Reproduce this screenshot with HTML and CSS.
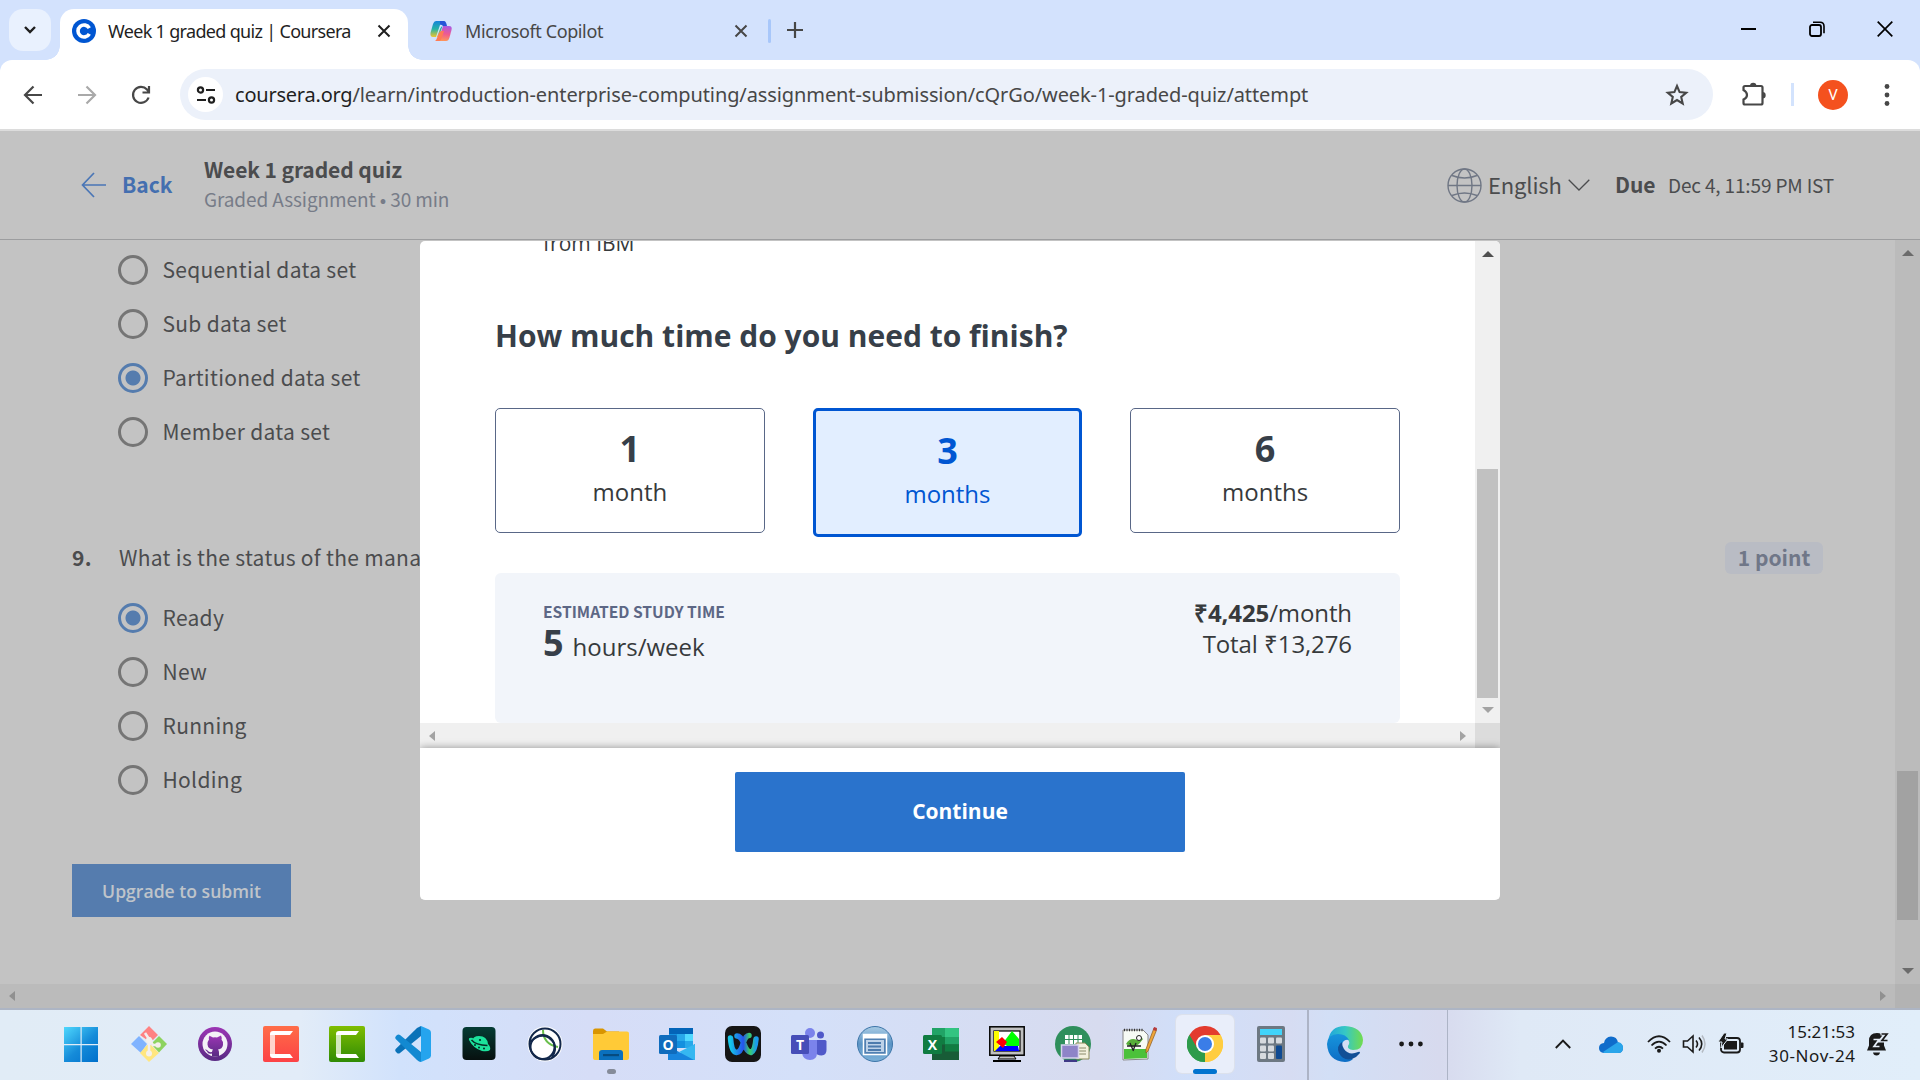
FILE: index.html
```html
<!DOCTYPE html>
<html lang="en">
<head>
<meta charset="utf-8">
<title>Week 1 graded quiz | Coursera</title>
<link rel="stylesheet" href="styles.css">
</head>
<body>
<div class="screen">
  <div class="tabstrip">
    <div class="tab-search"><svg width="14" height="14" viewBox="0 0 14 14"><path d="M2 4l5 5 5-5" fill="none" stroke="#1f1f1f" stroke-width="2.4"/></svg></div>
    <div class="tab active">
      <svg class="favicon" width="24" height="24" viewBox="0 0 24 24"><circle cx="12" cy="12" r="12" fill="#0056d2"/><path d="M17.3 9.2A6 6 0 1 0 17.3 14.8" fill="none" stroke="#fff" stroke-width="3.6"/></svg>
      <span class="tab-title t1">Week 1 graded quiz | Coursera</span>
      <svg class="tab-close" width="14" height="14" viewBox="0 0 14 14"><path d="M1.5 1.5l11 11M12.5 1.5l-11 11" stroke="#1f1f1f" stroke-width="2"/></svg>
    </div>
    <div class="tab">
      <svg class="favicon" width="24" height="24" viewBox="0 0 24 24"><defs><linearGradient id="cpA" x1="0" y1="0" x2="0" y2="1"><stop offset="0" stop-color="#1483dc"/><stop offset=".5" stop-color="#24b3a5"/><stop offset="1" stop-color="#f0c62d"/></linearGradient><linearGradient id="cpB" x1="0.3" y1="0" x2="0.2" y2="1"><stop offset="0" stop-color="#ae5ae0"/><stop offset=".5" stop-color="#ef5a90"/><stop offset="1" stop-color="#ff9955"/></linearGradient></defs><path d="M7 2h8l-5 16H4Q1 18 1.500 14L4 5Q5 2 7 2z" fill="url(#cpA)"/><path d="M17 22H9l5-15h6q3.500 0 2.500 4l-2 7.500Q19.500 22 17 22z" fill="url(#cpB)"/><path d="M11 2h4q2 0 3 5h-4q-2 0-3-2z" fill="#2754d8"/><path d="M14 7q-2 0-3 3l-3 8h-1l4-12q1-1 3 1z" fill="#d3e2fd"/><path d="M10 14l-2 5q-1 3-2 3h4q2 0 3-4l2-6h-2q-2 0-3 2z" fill="#ff7b55"/></svg>
      <span class="tab-title t2">Microsoft Copilot</span>
      <svg class="tab-close" width="14" height="14" viewBox="0 0 14 14"><path d="M1.500 1.500l11 11M12.500 1.500l-11 11" stroke="#474747" stroke-width="2"/></svg>
    </div>
    <i class="tab-divider"></i>
    <svg class="new-tab" width="16" height="16" viewBox="0 0 16 16"><path d="M8 0v16M0 8h16" stroke="#474747" stroke-width="2.200"/></svg>
    <div class="window-controls">
      <svg width="16" height="16" viewBox="0 0 16 16"><path d="M0 8h15" stroke="#000" stroke-width="2"/></svg>
      <svg width="16" height="16" viewBox="0 0 16 16"><rect x="1" y="4" width="11" height="11" rx="2" fill="none" stroke="#000" stroke-width="1.800"/><path d="M4 1.300h7q4 0 4 4v7" fill="none" stroke="#000" stroke-width="1.600"/></svg>
      <svg width="16" height="16" viewBox="0 0 16 16"><path d="M.7.7l14.600 14.600M15.300.7L.7 15.300" stroke="#000" stroke-width="1.700"/></svg>
    </div>
  </div>

  <div class="toolbar">
    <svg class="nav-back" width="20" height="20" viewBox="0 0 20 20"><path d="M19 10H3M10.500 1.500L2 10l8.500 8.500" fill="none" stroke="#474747" stroke-width="2.200"/></svg>
    <svg class="nav-fwd" width="20" height="20" viewBox="0 0 20 20"><path d="M1 10h16M9.500 1.500L18 10l-8.500 8.500" fill="none" stroke="#a9a9a9" stroke-width="2.200"/></svg>
    <svg class="nav-reload" width="20" height="20" viewBox="0 0 20 20"><path d="M17.600 12.500A8 8 0 1 1 16 4.500l1.500 1.800M18 1v6.500h-6.500" fill="none" stroke="#474747" stroke-width="2.200"/></svg>
    <div class="omnibox">
      <div class="site-info"><svg width="20" height="18" viewBox="0 0 20 18"><g fill="none" stroke="#1f1f1f" stroke-width="2.200"><circle cx="4.500" cy="4" r="2.600"/><path d="M10 4h9M1 14h9"/><circle cx="15.500" cy="14" r="2.600"/></g></svg></div>
      <div class="url"><b>coursera.org</b>/learn/introduction-enterprise-computing/assignment-submission/cQrGo/week-1-graded-quiz/attempt</div>
      <svg class="star" width="24" height="24" viewBox="0 0 24 24"><path d="M12 3l2.600 6.100 6.600.6-5 4.300 1.500 6.500-5.700-3.500-5.700 3.500L7.800 14l-5-4.300 6.600-.6z" fill="none" stroke="#474747" stroke-width="2.100"/></svg>
    </div>
    <svg class="ext" width="26" height="26" viewBox="0 0 26 26"><path d="M2.500 9V6.500q0-1.500 1.500-1.500h16q1.500 0 1.500 1.500V22q0 1.500-1.500 1.500H4q-1.500 0-1.500-1.500v-3.500q3.500-1.500 3.500-4.500T2.500 9z" fill="none" stroke="#474747" stroke-width="2.200"/><path d="M9 5a3.200 3.200 0 0 1 6.400 0zM21.500 11a3.200 3.200 0 0 1 0 6.400z" fill="#474747"/></svg>
    <i class="bar-divider"></i>
    <div class="avatar">V</div>
    <svg class="kebab" width="6" height="22" viewBox="0 0 6 22"><g fill="#474747"><circle cx="3" cy="2.500" r="2.400"/><circle cx="3" cy="11" r="2.400"/><circle cx="3" cy="19.500" r="2.400"/></g></svg>
  </div>

  <main class="page">
    <header class="quiz-head">
      <svg class="back-arrow" width="26" height="26" viewBox="0 0 26 26"><path d="M25 13H1.500M13 1L1.500 13 13 25" fill="none" stroke="#4a76b6" stroke-width="1.700"/></svg>
      <span class="back">Back</span>
      <div class="titles"><div class="title">Week 1 graded quiz</div><div class="subtitle">Graded Assignment • 30 min</div></div>
      <svg class="globe" width="35" height="35" viewBox="0 0 35 35"><g fill="none" stroke="#707785" stroke-width="1.400"><circle cx="17.500" cy="17.500" r="16.500"/><ellipse cx="17.500" cy="17.500" rx="7.500" ry="16.500"/><path d="M1 17.500h33M5 7.500q12.500 5 25 0M5 27.500q12.500-5 25 0"/></g></svg>
      <span class="lang">English</span>
      <svg class="chev" width="22" height="12" viewBox="0 0 22 12"><path d="M.7.7L11 11 21.300.7" fill="none" stroke="#4b4c4e" stroke-width="1.300"/></svg>
      <span class="due">Due</span>
      <span class="due-date">Dec 4, 11:59 PM IST</span>
    </header>
    <div class="body-row">
      <div class="quiz">
        <div class="option"><i class="radio"></i><span>Sequential data set</span></div>
        <div class="option"><i class="radio"></i><span>Sub data set</span></div>
        <div class="option"><i class="radio on"></i><span>Partitioned data set</span></div>
        <div class="option"><i class="radio"></i><span>Member data set</span></div>
        <div class="question"><span class="num">9.</span><span class="prompt">What is the status of the mana</span><span class="points">1 point</span></div>
        <div class="option"><i class="radio on"></i><span>Ready</span></div>
        <div class="option"><i class="radio"></i><span>New</span></div>
        <div class="option"><i class="radio"></i><span>Running</span></div>
        <div class="option"><i class="radio"></i><span>Holding</span></div>
        <div class="submit">Upgrade to submit</div>
      </div>
      <div class="page-vscroll"><i class="tri up"></i><i class="page-thumb"></i><i class="tri down"></i></div>
    </div>
    <div class="page-hscroll"><i class="tri left"></i><i class="tri right"></i><i class="page-corner"></i></div>

    <section class="modal">
      <div class="modal-main">
        <div class="modal-body">
          <div class="from">from IBM</div>
          <h2>How much time do you need to finish?</h2>
          <div class="plans">
            <div class="plan"><b>1</b><span>month</span></div>
            <div class="plan selected"><b>3</b><span>months</span></div>
            <div class="plan"><b>6</b><span>months</span></div>
          </div>
          <div class="estimate">
            <div><div class="est-label">ESTIMATED STUDY TIME</div><div class="hours"><b>5</b><span>hours/week</span></div></div>
            <div class="price"><div><b>₹4,425</b>/month</div><div>Total ₹13,276</div></div>
          </div>
        </div>
        <div class="modal-vscroll"><i class="tri up"></i><i class="modal-thumb"></i><i class="tri down"></i></div>
      </div>
      <div class="modal-hscroll"><i class="tri left"></i><i class="tri right"></i><i class="modal-corner"></i></div>
      <div class="modal-foot"><div class="continue">Continue</div></div>
    </section>
  </main>

  <footer class="taskbar">
    <div class="apps">
      <div class="app start"><svg viewBox="0 0 36 36"><defs><linearGradient id="win" gradientUnits="userSpaceOnUse" x1="2" y1="0" x2="34" y2="36"><stop offset="0" stop-color="#4fd8fd"/><stop offset=".55" stop-color="#158bd9"/><stop offset="1" stop-color="#0070cc"/></linearGradient></defs><path d="M1 1h16.500v17H1zM18.700 1H35v17H18.700zM1 19.200h16.500V36H1zM18.700 19.200H35V36H18.700z" fill="url(#win)"/></svg></div>
      <div class="app"><svg viewBox="0 0 36 36"><path d="M9 9l9-9 9 9-5 5-4-3-2 3z" fill="#ff8282"/><path d="M0 18l8-8 8 8-6 9z" fill="#80b3ff"/><path d="M28 10l8 8-8 8.500-8-8.500z" fill="#8dd35f"/><path d="M9 27l7-8h4l8 8-10 9z" fill="#ffe680"/><path d="M14 7l8 12 6 0M18 11v17" fill="none" stroke="#f2eef0" stroke-width="2.600"/><circle cx="18" cy="27.500" r="3" fill="#f4f0ec"/><circle cx="27" cy="19" r="2.800" fill="#f4f0ec"/><circle cx="18" cy="14" r="3" fill="#f4f0ec"/></svg></div>
      <div class="app"><svg viewBox="0 0 36 36"><defs><linearGradient id="gh" x1="0" y1="0" x2="0" y2="1"><stop offset="0" stop-color="#9b35b4"/><stop offset="1" stop-color="#592a83"/></linearGradient></defs><circle cx="18" cy="18" r="17" fill="url(#gh)"/><circle cx="18" cy="18" r="12.500" fill="#f4f1f7"/><path d="M12 9.500l4 2q2-.5 4 0l4-2q1 2 .5 4 2 2 1.500 5.500-.7 4-5 4.500 1 1 1 3v4h-7v-3q-4 1-5-2l-2-2q2-.5 3 1.500 1 1.500 4 1 0-1.500 1-2.500-5-.5-5.500-5-.2-3 1.500-5-.5-2 .5-4z" fill="url(#gh)"/></svg></div>
      <div class="app"><svg viewBox="0 0 36 36"><defs><linearGradient id="cr" x1="0" y1="0" x2="0" y2="1"><stop offset="0" stop-color="#ff6d48"/><stop offset="1" stop-color="#fc4246"/></linearGradient></defs><rect width="36" height="36" rx="2" fill="url(#cr)"/><path d="M10 5h20l-3 4H12v19h15l3 4H10q-3 0-3-3V8q0-3 3-3z" fill="#fff"/><path d="M7 9l5 0v19l-5 0z" fill="#ffd5cc"/></svg></div>
      <div class="app"><svg viewBox="0 0 36 36"><defs><linearGradient id="cg" x1="0" y1="0" x2="0" y2="1"><stop offset="0" stop-color="#7fbd00"/><stop offset="1" stop-color="#2f8b05"/></linearGradient></defs><rect width="36" height="36" rx="2" fill="url(#cg)"/><path d="M10 5h20l-3 4H12v19h15l3 4H10q-3 0-3-3V8q0-3 3-3z" fill="#fff"/><path d="M7 9l5 0v19l-5 0z" fill="#d3e8bd"/></svg></div>
      <div class="app"><svg viewBox="0 0 36 36"><path d="M26 0v10L5 27q-1.500 1-3 0L.7 25.500q-1-1.200 0-2.500L22 2z" fill="#0b72b8"/><path d="M.7 10.500L2 9q1.500-1 3 0l21 17v10q-2 0-4-2L.7 13q-1-1.200 0-2.500z" fill="#1389d1"/><path d="M26 0l8 3.500q2 1 2 3v23q0 2-2 3L26 36z" fill="#25a4ee"/></svg></div>
      <div class="app"><svg viewBox="0 0 36 36"><defs><linearGradient id="pl" x1="0" y1="0" x2="0" y2="1"><stop offset="0" stop-color="#053c34"/><stop offset="1" stop-color="#07100f"/></linearGradient></defs><rect x="1.500" y="1" width="33" height="33" rx="4" fill="url(#pl)"/><path d="M11 15q1-5 7-5 8 0 9 8 3 3 2 6-2 2-8 1Q12 22 8 14q-1-3 4-2z" fill="#1ce29c"/><path d="M10.500 14q4 5 16 5.500" fill="none" stroke="#052c26" stroke-width="1.300"/><g fill="#052c26"><circle cx="14" cy="19" r="1"/><circle cx="18" cy="21.500" r="1"/><circle cx="23" cy="22.500" r="1"/><circle cx="19" cy="14" r="1.100"/></g></svg></div>
      <div class="app"><svg viewBox="0 0 36 36"><circle cx="18" cy="18" r="17.500" fill="#fff"/><path d="M16 4q0 14 15 17" fill="none" stroke="#69bf4b" stroke-width="2"/><g fill="none" stroke="#12284b" stroke-width="2"><circle cx="18" cy="18" r="15.500"/><circle cx="15.500" cy="21" r="12"/><path d="M3 16Q17 3 27 17q3 7-2 14"/></g></svg></div>
      <div class="app run"><svg viewBox="0 0 36 36"><path d="M0 5q0-2.500 2-2.500h8l4 3h12v6H0z" fill="#d99500"/><path d="M0 8h10l4-2.500h20q2 0 2 2V32q0 2-2 2H2q-2 0-2-2z" fill="#ffca37"/><path d="M6 34v-7q0-3 3-3h18q3 0 3 3v7z" fill="#0a70bd"/><rect x="10" y="28" width="16" height="2.200" fill="#064b7f"/></svg></div>
      <div class="app"><svg viewBox="0 0 36 36"><path d="M10 2h24v20H10z" fill="#1490df"/><path d="M10 2h24v6H10z" fill="#0364b8"/><path d="M18 8h8v7h-8z" fill="#28a8ea"/><path d="M26 8h8v7h-8z" fill="#50d9ff"/><path d="M26 15h8v7h-8z" fill="#28a8ea"/><path d="M9 20l13 7 14-9v15q0 1-1 1H9z" fill="#1784dd"/><path d="M36 18v15q0 1-1 1L20 26z" fill="#35b7f1"/><rect y="9" width="18" height="19" rx="1.500" fill="#0f6cbd"/><text x="9" y="23.500" text-anchor="middle" class="glyph">O</text></svg></div>
      <div class="app"><svg viewBox="0 0 36 36"><defs><linearGradient id="wx" x1="0" x2="1"><stop offset="0" stop-color="#15c7e8"/><stop offset=".5" stop-color="#2553ed"/><stop offset=".75" stop-color="#3ccf64"/><stop offset="1" stop-color="#1a9aee"/></linearGradient></defs><rect width="36" height="36" rx="7" fill="#151515"/><path d="M5.500 12q1 14 6 14.500 4 0 6.500-8.500t6-8.500M12 10q4 0 7 8t7 8.500q4-2 5-13.500" fill="none" stroke="url(#wx)" stroke-width="5.500" stroke-linecap="round"/></svg></div>
      <div class="app"><svg viewBox="0 0 36 36"><circle cx="19" cy="7" r="5" fill="#7b83eb"/><circle cx="29.500" cy="9" r="3.500" fill="#5059c9"/><path d="M24 14h10q1.500 0 1.500 1.500V24q0 5-5 5.500-5 0-7-4z" fill="#5059c9"/><path d="M11 14h15v13q0 7-7 7t-8-7z" fill="#7b83eb"/><rect y="9" width="18" height="19" rx="1.500" fill="#464eb8"/><text x="9" y="23.500" text-anchor="middle" class="glyph">T</text></svg></div>
      <div class="app"><svg viewBox="0 0 36 36"><defs><linearGradient id="bl" x1="0" y1="0" x2="0" y2="1"><stop offset="0" stop-color="#a8cbe4"/><stop offset=".5" stop-color="#5b94c5"/><stop offset="1" stop-color="#7bb0d8"/></linearGradient></defs><circle cx="18" cy="18" r="17.500" fill="url(#bl)" stroke="#3d75a8"/><rect x="6.500" y="8.500" width="23" height="20" fill="#5080b2" stroke="#fff" stroke-width="1.500"/><path d="M7 10.500h22" stroke="#fff" stroke-width="4"/><rect x="9" y="14" width="18" height="12" fill="#bdd2e8"/><path d="M11 17h13M11 20.500h13M11 24h13" stroke="#4c7bad" stroke-width="1.800"/></svg></div>
      <div class="app"><svg viewBox="0 0 36 36"><path d="M9 2h26q1 0 1 1v31H9z" fill="#185c37"/><path d="M9 2h13v9H9z" fill="#21a366"/><path d="M22 2h13q1 0 1 1v8H22z" fill="#33c481"/><path d="M9 11h13v7.500H9z" fill="#107c41"/><path d="M22 11h14v7.500H22z" fill="#21a366"/><path d="M22 18.500h14v7H22z" fill="#107c41"/><rect y="9" width="19" height="19" rx="1.500" fill="#107c41"/><text x="9.500" y="23.500" text-anchor="middle" class="glyph">X</text></svg></div>
      <div class="app"><svg viewBox="0 0 36 36"><rect x=".8" y=".8" width="34.400" height="28.400" fill="#c0c0c0" stroke="#000" stroke-width="1.500"/><rect x="5" y="5" width="26" height="20" fill="#fff" stroke="#000" stroke-width="1.200"/><path d="M5 5h5v20H5z" fill="#ff0"/><path d="M14 17l9-12 7 8v7H18z" fill="#0f0"/><path d="M6 25l5-5h18l1 5z" fill="#00f"/><path d="M7 16l6-5 5 5-4 6z" fill="#f00"/><path d="M11 30h14l2 3H9z" fill="#c0c0c0" stroke="#000"/><path d="M4 35h28" stroke="#000" stroke-width="2"/></svg></div>
      <div class="app"><svg viewBox="0 0 36 36"><circle cx="18" cy="18" r="18" fill="#2f8f5c"/><path d="M10 9h17v9H10z" fill="#fff"/><path d="M14 9v9M18.500 9v9M23 9v9M10 13.500h17" stroke="#2f8f5c"/><path d="M21 17h9l4 4v12H21z" fill="#f3f1dd" stroke="#8a8a5a"/><path d="M24 22h7M24 25h7M24 28h7" stroke="#8a8a6a"/><rect x="6.500" y="19" width="17" height="13" fill="#8e84c8" stroke="#d6d3ee" stroke-width="1.500"/><path d="M9 35h13" stroke="#3f3a86" stroke-width="2.500"/></svg></div>
      <div class="app"><svg viewBox="0 0 36 36"><path d="M2 4h20l5 5v24l-25 1z" fill="#f7fbf5" stroke="#888"/><path d="M3 4h19" stroke="#333" stroke-width="2.500" stroke-dasharray="1 1.500"/><path d="M3 23h23v9l-23 1z" fill="#4cc13a"/><path d="M5 18q4-7 11-4l3-4 3 3-4 5q-6 5-13 0z" fill="#58ae3a"/><circle cx="18" cy="12" r="2.500" fill="#fff" stroke="#222"/><path d="M6 20h14M9 17l3 7M15 17l-3 8" stroke="#222" stroke-width="1.300"/><path d="M33 2l3 1-9 22-2 2v-4z" fill="#eea53a" stroke="#8a5a20" stroke-width=".7"/><path d="M33 1l3 1-1 3-3-1z" fill="#b73940"/></svg></div>
      <div class="app current"><svg viewBox="0 0 36 36"><path d="M18 18L2.400 9A18 18 0 0 1 33.600 9z" fill="#e33b2e"/><path d="M18 18L33.600 9A18 18 0 0 1 18 36z" fill="#ffcd41"/><path d="M18 18v18A18 18 0 0 1 2.400 9z" fill="#2d9b4b"/><path d="M18 9h15.600Q36 14 35.900 18L26 22z" fill="#ffcd41"/><path d="M10 22L2.400 9l8-2 8 2z" fill="#e33b2e"/><path d="M2.400 9l8.600 15 7 3v9A18 18 0 0 1 2.400 9z" fill="#2d9b4b"/><path d="M18 36l8-13.500 2-5 8 .5A18 18 0 0 1 18 36z" fill="#ffcd41"/><circle cx="18" cy="18" r="9" fill="#fff"/><circle cx="18" cy="18" r="7" fill="#3a7de8"/></svg></div>
      <div class="app"><svg viewBox="0 0 36 36"><rect x="4" width="28" height="36" rx="2" fill="#6d7882"/><rect x="7" y="3" width="22" height="6" fill="#41d4fa"/><g fill="#d6dade"><rect x="7" y="11.500" width="6" height="6" rx="1"/><rect x="15" y="11.500" width="6" height="6" rx="1"/><rect x="23" y="11.500" width="6" height="6" rx="1"/><rect x="7" y="19.500" width="6" height="6" rx="1"/><rect x="15" y="19.500" width="6" height="6" rx="1"/><rect x="7" y="27" width="6" height="6" rx="1"/><rect x="15" y="27" width="6" height="6" rx="1"/></g><rect x="23" y="19.500" width="6" height="13.500" rx="1" fill="#0f4a92"/></svg></div>
    </div>
    <div class="pinned">
      <svg width="36" height="36" viewBox="0 0 36 36"><defs><linearGradient id="eg" x1="0" x2="1"><stop offset="0" stop-color="#20a4dd"/><stop offset=".5" stop-color="#36c8c4"/><stop offset="1" stop-color="#72dc4d"/></linearGradient><linearGradient id="eb" x1="0" y1="0" x2="0" y2="1"><stop offset="0" stop-color="#1795dc"/><stop offset="1" stop-color="#0d6dc5"/></linearGradient></defs><path d="M1 15Q3 0 18 0q17 1 18 14 0 10-10 10-6-1-5-4 3-4-1-7-8-7-19 2z" fill="url(#eg)"/><path d="M0 18q1-10 11-10 8 0 11 6-5-1-7 4-3 12 11 15-3 3-8 3Q1 35 0 18z" fill="url(#eb)"/><path d="M15 16q-6 4-3 11 4 8 13 6 5-2 8-6 0-2-2-1-9 4-14-3-2-3-2-7z" fill="#114f96"/></svg>
      <svg class="more" width="24" height="6" viewBox="0 0 24 6"><g fill="#1a1a1a"><circle cx="2.600" cy="3" r="2.400"/><circle cx="12" cy="3" r="2.400"/><circle cx="21.400" cy="3" r="2.400"/></g></svg>
    </div>
    <div class="tray">
      <svg class="up" width="16" height="10" viewBox="0 0 16 10"><path d="M.8 9L8 1.500 15.200 9" fill="none" stroke="#1a1a1a" stroke-width="1.900"/></svg>
      <svg class="cloud" width="24" height="17" viewBox="0 0 24 17"><path d="M5 7q1-6 7-6.500 6 0 7 6 5 1 5 5.500 0 5-5 5H5q-5-.5-5-5T5 7z" fill="#0f6ccb"/><path d="M4 16l15-10q5 1 5 6 0 5-5 5H5z" fill="#2aa5ea"/></svg>
      <svg class="wifi" width="24" height="18" viewBox="0 0 24 18"><g fill="none" stroke="#1a1a1a" stroke-width="1.800"><path d="M1 7q11-11.500 22 0M4.500 10.500q7.500-7.800 15 0M8 13.700q4-4 8 0"/></g><circle cx="12" cy="15.700" r="2" fill="#1a1a1a"/></svg>
      <svg class="vol" width="25" height="20" viewBox="0 0 25 20"><path d="M1.500 7h4L11 2v16l-5.500-5h-4zM14 6.500q3 3.500 0 7M17 3.500q5.500 6.500 0 13" fill="none" stroke="#1a1a1a" stroke-width="1.600"/><path d="M20 1.500q6 8.500 0 17" fill="none" stroke="#b4bac2" stroke-width="1.500"/></svg>
      <svg class="bat" width="26" height="20" viewBox="0 0 26 20"><rect x="2" y="4" width="19" height="14.500" rx="3" fill="none" stroke="#1a1a1a" stroke-width="1.800"/><path d="M22 8.500h1.500q1 0 1 1v3.500q0 1-1 1H22z" fill="#1a1a1a"/><rect x="5" y="7" width="13" height="8.500" fill="#1a1a1a"/><path d="M5-1L-1 8h4l-1 6 7-9H6l2-6z" fill="#1a1a1a" stroke="#e0ecf7" stroke-width="1"/></svg>
      <div class="clock"><span class="time">15:21:53</span><span class="date">30-Nov-24</span></div>
      <svg class="bell" width="22" height="24" viewBox="0 0 22 24"><path d="M10 1q5 0 7 4v8.500l2 5H0l2-5V9q0-8 8-8z" fill="#1a1a1a"/><path d="M6 20.500h7q-.5 3-3.500 3T6 20.500z" fill="#1a1a1a"/><path d="M13.500 1.500h6l-5.500 7h6" fill="none" stroke="#e4edf8" stroke-width="4"/><path d="M14.500 2h5.500l-5 6.500h5.500" fill="none" stroke="#1a1a1a" stroke-width="1.700"/><path d="M6.500 7.500H12l-5 7h5.500" fill="none" stroke="#e8eef8" stroke-width="1.700"/></svg>
    </div>
  </footer>
</div>
</body>
</html>
```
FILE: styles.css
```css
* { box-sizing: border-box; }
body { margin: 0; overflow: hidden; }
svg { display: block; flex: none; }
i { display: block; flex: none; }
.screen { width: 1920px; height: 1080px; display: flex; flex-direction: column; font-family: "Open Sans", sans-serif; white-space: nowrap; overflow: hidden; }

/* tab strip */
.tabstrip { height: 60px; background: #d3e2fd; display: flex; align-items: flex-start; flex: none; position: relative; z-index: 1; }
.tab-search { width: 42px; height: 42px; margin: 9px 9px 0; border-radius: 14px; background: #e9f1fe; display: flex; align-items: center; justify-content: center; flex: none; }
.tab { width: 348px; height: 51px; margin-top: 9px; padding: 0 17px 8px 12px; display: flex; align-items: center; color: #474747; position: relative; }
.tab.active { background: #fff; border-radius: 14px 14px 0 0; color: #1f1f1f; }
.tab.active::before, .tab.active::after { content: ""; position: absolute; bottom: 0; width: 14px; height: 14px; }
.tab.active::before { left: -14px; background: radial-gradient(circle at 0 0, transparent 13.5px, #fff 14px); }
.tab.active::after { right: -14px; background: radial-gradient(circle at 100% 0, transparent 13.5px, #fff 14px); }
.tab:not(.active) { width: 346px; padding-left: 21px; padding-right: 6px; }
.tab-title { margin-left: 12px; font: 18px/24px "Noto Sans", sans-serif; margin-top: 1px; }
.t1 { letter-spacing: -.68px; }
.t2 { letter-spacing: -.38px; }
.tab-close { margin-left: auto; }
.tab-divider { width: 3px; height: 24px; border-radius: 2px; background: #a8c7fa; margin: 19px 0 0 14px; }
.new-tab { margin: 22px 0 0 16px; }
.window-controls { margin: 21px 27px 0 auto; display: flex; gap: 52px; }

/* toolbar */
.toolbar { height: 71px; flex: none; background: #fff; border-bottom: 2px solid #dcdcdc; display: flex; align-items: center; position: relative; border-radius: 12px 12px 0 0; box-shadow: 0 -12px 0 0 #d3e2fd; }
.nav-back { margin-left: 23px; }
.nav-fwd { margin-left: 34px; }
.nav-reload { margin-left: 34px; }
.omnibox { width: 1533px; height: 51px; margin-left: 29px; border-radius: 26px; background: #ecf1fa; display: flex; align-items: center; padding: 0 24px 0 8px; }
.site-info { width: 35px; height: 35px; border-radius: 50%; background: #fff; display: flex; align-items: center; justify-content: center; }
.url { margin-left: 12px; font: 20px/28px "Noto Sans", sans-serif; color: #474747; letter-spacing: -.1px; }
.url b { color: #1f1f1f; font-weight: 400; letter-spacing: -.22px; }
.star { margin-left: auto; }
.ext { margin-left: 28px; margin-top: -2px; }
.bar-divider { width: 3px; height: 23px; background: #d3e3fd; margin-left: 24px; }
.avatar { width: 30px; height: 30px; margin-left: 24px; border-radius: 50%; background: #f4511e; color: #fff; font: 15px/31px Roboto, sans-serif; text-align: center; }
.kebab { margin-left: 36px; }

/* page */
.page { height: 877px; flex: none; background: #c3c3c3; position: relative; font-family: "Noto Sans CJK JP", sans-serif; color: #4b4c4e; }
.quiz-head { height: 109px; border-bottom: 1px solid #9c9d9f; display: flex; align-items: center; padding-left: 81px; }
.back { margin: -2px 0 0 15px; width: 82px; font-size: 21px; font-weight: 700; color: #446fb0; }
.titles { width: 1242px; margin-top: -2px; }
.title { font-size: 21px; line-height: 30px; font-weight: 700; letter-spacing: -.1px; }
.subtitle { font-size: 19px; line-height: 30px; color: #777c88; letter-spacing: -.1px; }
.globe { margin-left: 1px; }
.lang { margin: -2px 0 0 6px; width: 81px; font-size: 22px; letter-spacing: -.15px; }
.due { margin: -3px 0 0 24px; width: 53px; font-size: 21px; font-weight: 700; }
.due-date { font-size: 19px; letter-spacing: -.15px; margin-top: -2px; }
.chev { margin-left: -1px; margin-right: 1px; }
.body-row { height: 744px; display: flex; }
.quiz { flex: 1; padding-top: 3px; }
.option { height: 54px; padding-left: 117.5px; display: flex; align-items: center; gap: 15px; font-size: 21px; letter-spacing: .3px; }
.option span { margin-top: -2px; }
.radio { width: 30px; height: 30px; border: 3px solid #757575; border-radius: 50%; }
.radio.on { border-color: #557cae; background: radial-gradient(circle, #557cae 7px, transparent 8px); }
.question { height: 72px; margin-top: 63px; padding-left: 72px; display: flex; align-items: center; font-size: 21px; letter-spacing: .3px; }
.num { width: 47px; font-weight: 700; margin-top: -2px; }
.prompt { margin-top: -2px; }
.points { margin-left: auto; margin-right: 72px; width: 98px; height: 32px; border-radius: 6px; background: #b9bcc4; color: #707788; text-align: center; line-height: 30px; font-weight: 700; letter-spacing: 0; }
.question + .option { margin-top: -3px; }
.submit { width: 219px; height: 53px; margin: 57px 0 0 72px; background: #557cae; color: #bfc4ca; font: 600 17.6px/54px "Open Sans", sans-serif; text-align: center; }

/* scrollbars */
.tri { width: 0; height: 0; border: 6px solid transparent; }
.tri.up { border-top: 0; border-bottom-color: #505050; }
.tri.down { border-bottom: 0; border-top-color: #505050; }
.tri.left { border-left: 0; border-right-color: #a3a3a3; }
.tri.right { border-right: 0; border-left-color: #a3a3a3; }
.page-vscroll { width: 25px; background: #bbb; display: flex; flex-direction: column; align-items: center; padding: 10px 0; }
.page-vscroll .up { border-bottom-color: #6b6b6b; }
.page-vscroll .down { border-top-color: #6b6b6b; margin-top: 48px; }
.page-thumb { width: 21px; height: 149px; background: #a2a2a2; margin-top: 515px; }
.page-hscroll { height: 24px; background: #bbb; display: flex; align-items: center; padding-left: 9px; }
.page-hscroll .tri { border-top-width: 5px; border-bottom-width: 5px; }
.page-hscroll .left { border-right-color: #909090; }
.page-hscroll .right { border-left-color: #909090; margin-left: auto; }
.page-corner { width: 25px; height: 24px; margin-left: 9px; background: #b3b3b3; }

/* modal */
.modal { position: absolute; left: 420px; top: 110px; width: 1080px; height: 659px; border-radius: 5px; background: #fff; overflow: hidden; font-family: "Open Sans", sans-serif; color: #373a3c; }
.modal-main { height: 482px; display: flex; }
.modal-body { width: 1055px; padding: 0 75px; }
.from { height: 32px; margin-left: 48px; font-size: 21px; line-height: 28px; margin-top: -12px; }
h2 { margin: 54px 0 0; font-size: 30px; line-height: 42px; font-weight: 700; color: #373f49; }
.plans { display: grid; grid-template-columns: repeat(3, 1fr); gap: 48px; align-items: start; margin-top: 51px; }
.plan { height: 125px; border: 1px solid #596787; border-radius: 5px; display: flex; flex-direction: column; align-items: center; padding-top: 16px; }
.plan b { font-size: 36px; line-height: 48px; color: #373f49; }
.plan span { font-size: 24px; line-height: 36px; margin-top: 1px; }
.plan.selected { height: 129px; border: 3px solid #0056d2; background: #e2eeff; color: #0056d2; }
.plan.selected b { color: #0056d2; }
.estimate { height: 150px; margin-top: 36px; border-radius: 6px; background: #f2f5fa; padding: 23px 48px; display: flex; justify-content: space-between; }
.est-label { font: 700 15.6px/30px "Noto Sans CJK JP", sans-serif; color: #5d6785; }
.hours { display: flex; align-items: baseline; gap: 9px; line-height: 32px; font-size: 24px; margin-top: 1px; }
.hours b { font-size: 36px; color: #373f49; }
.price { text-align: right; font-size: 24px; line-height: 31px; letter-spacing: -.1px; padding-top: 1px; }
.modal-vscroll { width: 25px; background: #f0f0f0; display: flex; flex-direction: column; align-items: center; padding-top: 10px; }
.modal-thumb { width: 21px; height: 229px; background: #c1c1c1; margin: 212px 0 9px; }
.modal-vscroll .down { border-top-color: #a3a3a3; }
.modal-hscroll { height: 25px; background: #f0f0f0; display: flex; align-items: center; padding-left: 9px; }
.modal-hscroll .tri { border-top-width: 5px; border-bottom-width: 5px; }
.modal-hscroll .right { margin-left: auto; }
.modal-corner { width: 25px; height: 25px; background: #dcdcdc; margin-left: 9px; }
.modal-foot { height: 152px; background: #fff; position: relative; box-shadow: 0 0 8px rgba(0,0,0,.4); padding-top: 24px; }
.continue { width: 450px; height: 80px; margin: 0 auto; border-radius: 2px; background: #2a73cc; color: #fff; text-align: center; font-size: 21px; font-weight: 700; line-height: 78px; }

/* taskbar */
.taskbar { height: 72px; border-top: 2px solid #adb5c4; display: flex; background: linear-gradient(90deg, #e1ecf6 0, #e2ecf8 300px, #d1e2fc 400px, #d6ddf7 590px, #d4e0f9 800px, #d7dbef 1100px, #d0dffa 1190px, #d6dcf2 1290px, #d2dff6 1330px, #d7daee 1440px, #dfe9f6 1520px, #e1eefa 1920px); }
.apps { width: 1309px; border-right: 2px solid #adb4c6; padding-left: 48px; display: flex; align-items: flex-start; flex: none; }
.app { width: 58px; height: 58px; margin: 5px 4px 0; display: flex; align-items: center; justify-content: center; border-radius: 6px; position: relative; }
.app.start { margin-right: 6px; }
.app svg { width: 36px; height: 36px; }
.app.current { background: #e9eefa; box-shadow: 0 0 0 1px #dce1ec; }
.app.current::after, .app.run::after { content: ""; position: absolute; bottom: -1px; width: 24px; height: 5px; border-radius: 3px; background: #0073cf; }
.app.run::after { width: 9px; background: #858b99; }
.glyph { font: 700 14px "Open Sans", sans-serif; fill: #fff; }
.pinned { width: 139px; border-right: 1px solid #adb4c6; padding: 16px 0 0 18px; display: flex; align-items: flex-start; flex: none; }
.more { margin: 15px 0 0 36px; }
.tray { display: flex; padding-left: 107px; align-items: center; height: 68px; flex: 1; font-family: "Noto Sans", sans-serif; }
.cloud { margin-left: 28px; }
.wifi { margin-left: 24px; }
.vol { margin-left: 11px; }
.bat { margin-left: 12px; overflow: visible; }
.clock { width: 110px; display: flex; flex-direction: column; text-align: right; font-size: 17px; line-height: 24px; color: #1a1a1a; }
.date { letter-spacing: .6px; margin-right: -.6px; }
.bell { margin-left: 12px; }
```
